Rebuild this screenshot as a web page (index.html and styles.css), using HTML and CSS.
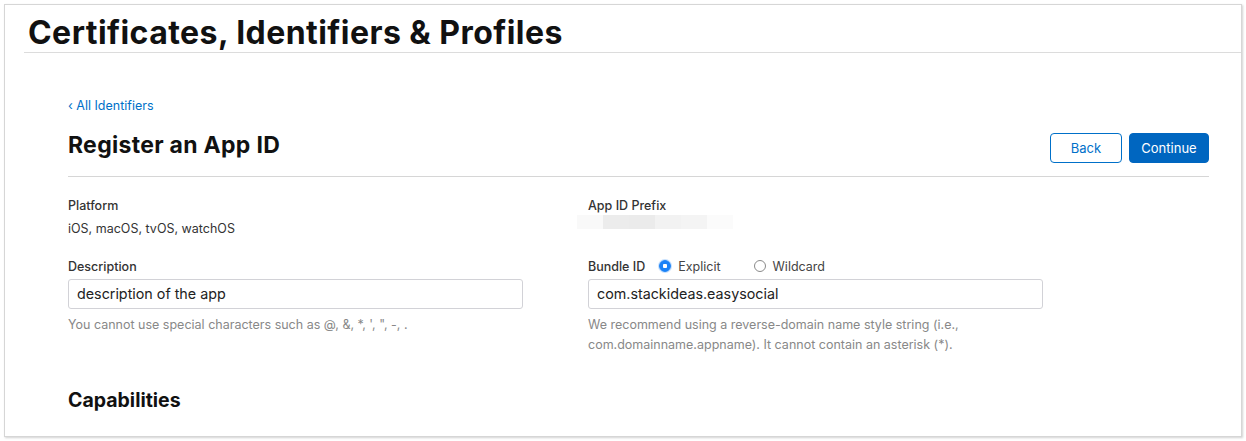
FILE: index.html
```html
<!DOCTYPE html>
<html lang="en">
<head>
<meta charset="utf-8">
<title>Register an App ID</title>
<link rel="stylesheet" href="styles.css">
</head>
<body>
<div class="window">
  <header class="top">
    <h1 class="site-title">Certificates, Identifiers &amp; Profiles</h1>
  </header>
  <main class="content">
    <a class="back-link" href="#">&#8249; All Identifiers</a>
    <div class="title-row">
      <h2 class="page-title">Register an App ID</h2>
      <div class="actions">
        <button class="btn btn-secondary">Back</button>
        <button class="btn btn-primary">Continue</button>
      </div>
    </div>
    <div class="form-grid">
      <div class="field">
        <div class="label">Platform</div>
        <div class="value">iOS, macOS, tvOS, watchOS</div>
      </div>
      <div class="field">
        <div class="label">App ID Prefix</div>
        <div class="blurred"><span class="b1"></span><span class="b2"></span><span class="b3"></span><span class="b4"></span><span class="b5"></span><span class="b6"></span></div>
      </div>
      <div class="field field-input">
        <div class="label">Description</div>
        <div class="input">description of the app</div>
        <p class="help">You cannot use special characters such as @, &amp;, *, ', ", -, .</p>
      </div>
      <div class="field field-input">
        <div class="label-row">
          <span class="label">Bundle ID</span>
          <label class="radio radio-first"><span class="dot checked"></span>Explicit</label>
          <label class="radio"><span class="dot"></span>Wildcard</label>
        </div>
        <div class="input">com.stackideas.easysocial</div>
        <p class="help">We recommend using a reverse-domain name style string (i.e.,<br>com.domainname.appname). It cannot contain an asterisk (*).</p>
      </div>
    </div>
    <h3 class="section-title">Capabilities</h3>
  </main>
</div>
</body>
</html>
```

FILE: styles.css
```css
* { box-sizing: border-box; }
html, body { margin: 0; padding: 0; background: #fff; }
body {
  font-family: "Inter", "Liberation Sans", sans-serif;
  color: #1d1d1f;
  padding: 4px;
  height: 441px;
  overflow: hidden;
}
.window {
  height: 433px;
  border: 1px solid #d6d6d6;
  box-shadow: 1px 1px 2px rgba(0,0,0,0.18);
  background: #fff;
  overflow: hidden;
}
.top {
  margin-left: 19px;
  border-bottom: 1px solid #dcdcdc;
  height: 48px;
}
.site-title {
  margin: 0;
  padding: 9px 0 0 4px;
  font-size: 32px;
  font-weight: 700;
  letter-spacing: 0.45px;
  line-height: 38px;
  color: #111;
}
.content {
  padding: 0 32px 0 63px;
}
.back-link {
  display: block;
  margin-top: 44px;
  font-size: 12.5px;
  line-height: 18px;
  color: #0070c9;
  text-decoration: none;
}
.title-row {
  display: flex;
  align-items: center;
  justify-content: space-between;
  margin-top: 11px;
  padding-bottom: 13px;
  border-bottom: 1px solid #d6d6d6;
}
.page-title {
  margin: 0;
  font-size: 23px;
  font-weight: 700;
  letter-spacing: 0.3px;
  line-height: 28px;
  color: #111;
}
.actions { display: flex; gap: 7px; margin-top: 7px; }
.btn {
  font-family: inherit;
  font-size: 13px;
  height: 30px;
  border-radius: 4px;
  padding: 0;
  cursor: pointer;
}
.btn-secondary {
  width: 72px;
  background: #fff;
  color: #0070c9;
  border: 1px solid #0070c9;
}
.btn-primary {
  width: 80px;
  background: #0066c0;
  color: #fff;
  border: 1px solid #0066c0;
}
.form-grid {
  display: grid;
  grid-template-columns: 520px 1fr;
  row-gap: 20px;
  margin-top: 20px;
}
.label {
  font-size: 12.5px;
  font-weight: 500;
  color: #333;
  line-height: 18px;
}
.value {
  margin-top: 5px;
  font-size: 12.5px;
  color: #333;
  line-height: 18px;
}
.blurred { display: flex; height: 14px; margin-left: -11px; margin-top: 0; }
.blurred span { display: block; height: 14px; width: 26px; }
.b1 { background: #f9f9f9; }
.b2 { background: #ececec; }
.b3 { background: #ebebeb; }
.b4 { background: #f2f2f2; }
.b5 { background: #f4f4f4; }
.b6 { background: #fbfbfb; }
.label-row { display: flex; align-items: center; }
.radio {
  display: flex;
  align-items: center;
  font-size: 12.5px;
  color: #444;
  line-height: 18px;
}
.radio-first { margin-left: 14px; margin-right: 33px; }
.dot {
  width: 12px;
  height: 12px;
  border-radius: 50%;
  border: 1px solid #8a8a8a;
  background: #fff;
  margin-right: 7px;
  margin-top: -3px;
}
.dot.checked {
  border: 1px solid #1a82f7;
  background: radial-gradient(circle, #fff 0 2px, #1a82f7 2.5px);
  box-shadow: 0 0 0 1px rgba(26,130,247,0.25);
}
.input {
  margin-top: 3px;
  width: 455px;
  height: 30px;
  border: 1px solid #d2d2d7;
  border-radius: 3px;
  padding: 0 8px;
  font-size: 14.3px;
  line-height: 28px;
  color: #222;
}
.help {
  margin: 6px 0 0;
  font-size: 12.5px;
  line-height: 20px;
  color: #888;
}
.section-title {
  margin: 33px 0 0;
  font-size: 19.5px;
  font-weight: 700;
  color: #111;
}
```
